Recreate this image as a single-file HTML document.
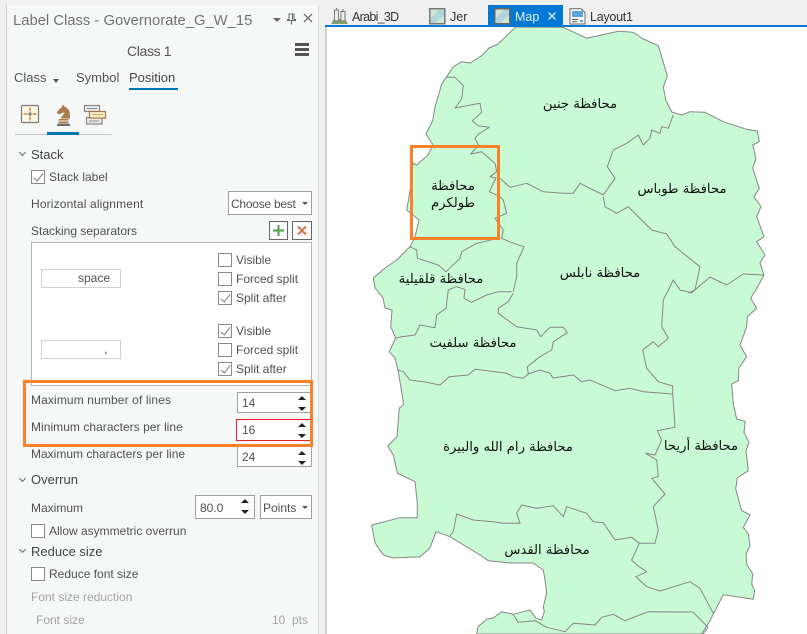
<!DOCTYPE html>
<html><head><meta charset="utf-8">
<style>
html,body{margin:0;padding:0;width:807px;height:634px;overflow:hidden;background:#f0f0f0}
body{position:relative;font-family:"Liberation Sans",sans-serif;font-size:12px;color:#505050}
.t{position:absolute;white-space:nowrap;height:16px;line-height:16px}
.b{position:absolute;box-sizing:border-box;background:#fff;border:1px solid #ababab}
.cb{position:absolute;box-sizing:border-box;width:14px;height:14px;border:1px solid #8a8a8a;background:#fff}
.cb.c:after{content:"";position:absolute;left:4px;top:0px;width:4px;height:9px;border:solid #777;border-width:0 1.5px 1.5px 0;transform:rotate(38deg)}
.up,.dn{position:absolute;width:0;height:0;border-left:4px solid transparent;border-right:4px solid transparent}
.up{border-bottom:4px solid #222}.dn{border-top:4px solid #222}
.h{font-size:13px;color:#444}
.g{color:#a3a3a3}
.chev{position:absolute;width:4px;height:4px;border:solid #666;border-width:0 1.6px 1.6px 0;transform:rotate(45deg)}
.tri{position:absolute;width:0;height:0;border-left:3px solid transparent;border-right:3px solid transparent;border-top:3px solid #555}
svg{position:absolute;overflow:visible}
</style></head><body>
<!-- map pane -->
<div style="position:absolute;left:325px;top:27px;width:482px;height:607px;background:#fff;border-left:2px solid #d0d0d0;box-sizing:border-box"></div>
<svg style="left:0;top:0" width="807" height="634" viewBox="0 0 807 634">
<g stroke="#868686" stroke-width="1" fill="none" stroke-linejoin="round">
<path fill="#c8fad4" d="M514.7 28L506.7 35.7L498 44L489 48L481.7 55.7L470 63L461.7 61.7L453 67L446.7 76.7L441.7 84L435 107L432.7 120.7L426 134L433 145L428 155L416.7 165L413 163L410.7 186.7L406.7 210L419 220L415 236.7L410 246.7L396.7 260L385 268L373.3 278L375 288L383 298L385 308L392 310L390.7 326.7L395.7 338L389.3 351.7L395 358L398 370L403 400L403.3 405L399.3 408L397 436.7L387.7 446L393.3 455L397.3 473L415 481.7L417.3 503L417.3 517.7L400 517.7L371.7 525L375 543L383.3 555L393.3 558L420 556.7L430 548L436 531.7L450 536.7L480 555L488.3 560.7L510 563L533 563L543.3 570L545 580L546.7 593L543.3 606.7L544.3 611.7L541.7 620L536 618.3L530 610L523 611.7L513.3 614.3L501.7 611.7L493.3 618L486.7 619.3L478 626.7L476.7 634L701.7 634L710 620.7L713.3 614L723.3 594.7L753.3 599.3L754.7 590.7L751.7 584L752.7 574L746.7 564L746 554L750 545.7L748.3 534L743.3 527.3L750 514.7L741.7 510.7L735.7 489L737.3 478L748.3 470.7L746 450.7L749 442.3L744 432.3L745.3 421.3L736.7 419L733.3 404L731.7 384L738.3 380.7L739 368L746.7 356.7L740 345L746.7 326.7L747.3 316.7L756.7 308.3L750.7 298.3L756.7 288.3L764 275L760 263L765 255L756.7 241.7L764 236.7L756.7 216.7L761 206.7L754 196.7L759.3 188.3L752.7 168.3L756 158.3L752.7 145L759.3 141.7L757.3 131L746.7 129.3L723.3 121.7L705 112.3L690 111.7L681.7 115L671.7 112L666 100.7L663.3 87.3L667.3 75.7L658.3 45.7L643.3 39L633.3 32.3L618.3 31.3L586.7 38.3L563.3 27.3L514.7 27Z"/>
<path d="M446.7 77.3L455 77.3L463.3 85.7L461.7 99L455 108L480 103.3L481.7 112.3L472.3 120.7L478.3 125.7L489.3 127.3L478.3 134L475 138.3L478.3 145L470.7 154L481.7 151.7L495 163.3L496.7 171.7L490 176.7L496 178L489.3 191.7L500 196.7L503.3 200L506.7 213.3L495 218.3L503.3 230L501.7 238.3L513.3 243.3L524 246.7L516.7 263.3L516.7 276.7L513.3 291.7"/>
<path d="M410 246.7L416.7 250L417.3 258.3L438.3 265L446 271.7L460 258.3L461.7 251.7L476.7 243.3L498.3 238.3"/>
<path d="M395.7 338.3L401.7 336.7L415 335L420 325L435 327.7L436.7 315L446 308.3L448.3 290L456 286.7L465 289.3L464 298.3L471.7 302.3L486.7 295L498.3 291.7L511.7 291.7"/>
<path d="M513.3 293.3L508.3 301.7L498.3 308.3L498.3 313.3L516.7 326.7L536.7 330L540.7 336.7L550 327.3L563.3 327.3L567.3 332.7L553.3 341.7L551.7 350L540 356.7L527.3 366.7L528.3 374"/>
<path d="M398.3 370L403.3 371.7L410 380L425 382L440 385L449.3 376.7L468.3 375L475 369.3L506.7 373.3L513.3 376.7L523.3 378.3L528.3 374L540 370L550 373.3L553 378L573.3 375L581.7 381.7L590 380L615 390.7L630 388.3L643.3 391.7L672.7 394"/>
<path d="M672.7 394L672.7 386L658.3 381.7L646.7 368.3L642.7 350L653.3 341.7L658.3 346.7L668.3 338.3L661.7 326.7L663.3 300L673.3 280L680 290L691.7 292.7L710 277L726.7 285L743.3 274L763 275"/>
<path d="M603.3 196.7L605 206.7L616.7 213.3L628.3 206.7L651.7 230L666.7 234L675 246.7L700 266.7L695 290L688.3 293.3"/>
<path d="M500 178.3L510 187.3L526.7 183.3L543.3 191.7L563.3 193.3L573.3 193.3L580 183.3L603.3 195L615 178.3L607.3 166.7L613.3 150L626.7 143.3L638.3 135L643.3 145L650 138.3L651.7 130L660 133.3L661.7 126.7L668.3 128.3L673.3 115"/>
<path d="M672.7 394L675 427.3L657.3 430.7L661.7 440L655 455L645.7 453.3L656.7 460L658.3 476.7L651.7 478.3L665 494L653.3 506.7L658.3 530L655 543.3L639.3 543.3"/>
<path d="M450 536L453.3 531.7L456.7 514L473.3 520L493.3 521.7L503.3 523.3L520 523.3L516.7 513.3L521.7 505L536.7 508.3L553.3 505.7L563.3 516.7L566.7 506.7L586.7 513.3L593.3 521.7L603.3 522.7L615 540L631.7 537.3L639.3 543.3L631.7 560L636.7 565L646.7 571.7L636 576.7L646.7 586.7L660 591L690 581.7L700 588.3L713.3 613.3"/>
<path d="M512.7 614L518.3 622.3L535 620.7L546.7 627.3L565 631.7L573.3 623.3L595 625L601.7 617.3L613.3 614.3L625 620.7L648.3 611.7L673 612L693 612L708 627.3L703 634"/>
</g>
<g font-family="'DejaVu Sans',sans-serif" font-size="13.2" fill="#111" text-anchor="middle" direction="rtl">
<text x="580" y="108">محافظة جنين</text>
<text x="682" y="193">محافظة طوباس</text>
<text x="600" y="277">محافظة نابلس</text>
<text x="441" y="283">محافظة قلقيلية</text>
<text x="473" y="347">محافظة سلفيت</text>
<text x="508" y="451">محافظة رام الله والبيرة</text>
<text x="701" y="450">محافظة أريحا</text>
<text x="547" y="554">محافظة القدس</text>
<text x="453" y="190">محافظة</text>
<text x="453" y="207">طولكرم</text>
</g>
<rect x="411.5" y="146.5" width="87" height="92" fill="none" stroke="#fb8128" stroke-width="3"/>
</svg>
<!-- tabs -->
<div style="position:absolute;left:325px;top:25px;width:482px;height:2px;background:#0078d4"></div>
<div style="position:absolute;left:488px;top:5px;width:75px;height:20px;background:#0078d4"></div>
<svg style="left:331px;top:7px" width="17" height="18" viewBox="0 0 17 18">
<path d="M0 17L3 12H14L17 17Z" fill="#7aa56a"/>
<rect x="3.5" y="3" width="4" height="11" fill="#eee" stroke="#777"/><rect x="10" y="4.500" width="4" height="9.500" fill="#eee" stroke="#777"/>
<path d="M5.500 1V3M12 2V4.500" stroke="#777"/>
</svg>
<div class="t" style="left:352px;top:9px;font-size:12.5px;color:#333;letter-spacing:-.7px">Arabi_3D</div>
<svg style="left:429px;top:8px" width="17" height="17" viewBox="0 0 17 17"><rect x=".75" y=".75" width="15" height="15" fill="#cfe7d2" stroke="#777" stroke-width="1.500"/><path d="M10 2H15V8L11 10L7 15H2V10Z" fill="#8fc4e0" opacity=".55"/></svg>
<div class="t" style="left:450px;top:9px;font-size:12.5px;color:#333">Jer</div>
<svg style="left:494px;top:8px" width="17" height="17" viewBox="0 0 17 17"><rect x=".75" y=".75" width="15" height="15" fill="#cfe7d2" stroke="#666" stroke-width="1.500"/><path d="M10 2H15V8L11 10L7 15H2V10Z" fill="#8fc4e0" opacity=".55"/></svg>
<div class="t" style="left:515px;top:9px;font-size:12.5px;color:#e4f1fb">Map</div>
<svg style="left:547px;top:11px" width="10" height="10"><path d="M1.500 1.500L8.500 8.500M8.500 1.500L1.500 8.500" stroke="#d5e9f8" stroke-width="1.300"/></svg>
<svg style="left:569px;top:8px" width="17" height="17" viewBox="0 0 17 17"><path d="M1 .75H12L16 4.500V16H1Z" fill="#fff" stroke="#666"/><rect x="3" y="3" width="11" height="6" fill="#5fa3dc"/><path d="M3 11.500H9M3 13.800H8" stroke="#555"/><path d="M11 12h3v2h-3z" fill="#5fa3dc"/></svg>
<div class="t" style="left:590px;top:9px;font-size:12.5px;color:#333;letter-spacing:-.25px">Layout1</div>

<!-- panel -->
<div style="position:absolute;left:6px;top:5px;width:313px;height:629px;box-sizing:border-box;background:#f6f8f8;border-left:1.500px solid #cfcfcf;border-right:1px solid #dcdcdc"></div>
<div class="t" style="left:13px;top:12px;font-size:14.8px;line-height:18px;height:18px;color:#727272">Label Class - Governorate_G_W_15</div>
<div class="tri" style="left:273px;top:18px;border-left-width:4px;border-right-width:4px;border-top-width:4px;border-top-color:#666"></div>
<svg style="left:286px;top:13px" width="12" height="12"><path d="M3 1H8V6.500H9.500V7.500H1.500V6.500H3ZM5.500 7.500V11.500M6.500 1V6.500" stroke="#666" fill="none"/></svg>
<svg style="left:303px;top:13px" width="10" height="10"><path d="M1 1L9 9M9 1L1 9" stroke="#707070" stroke-width="1.300"/></svg>
<div class="t" style="left:127px;top:43px;font-size:14px;color:#555;letter-spacing:-.35px">Class 1</div>
<div style="position:absolute;left:295px;top:43px;width:14px;height:3px;background:#555;box-shadow:0 5px 0 #555,0 10px 0 #555"></div>
<div class="t" style="left:14px;top:70px;font-size:13px;color:#555">Class</div>
<div class="tri" style="left:53px;top:79px;border-left-width:3.500px;border-right-width:3.500px;border-top-width:4px"></div>
<div class="t" style="left:76px;top:70px;font-size:13px;color:#555">Symbol</div>
<div class="t" style="left:129px;top:70px;font-size:13px;color:#444">Position</div>
<div style="position:absolute;left:129px;top:88px;width:49px;height:2px;background:#0078b8"></div>
<!-- position icons -->
<svg style="left:20px;top:104px" width="100" height="22" viewBox="0 0 100 22">
<rect x="1.500" y="1.500" width="17" height="17" rx="1" fill="#fdf7e4" stroke="#7a7a7a" stroke-width="1.200"/>
<path d="M10 3.500V7.500M10 12.500V16.500M3.500 10H7.500M12.500 10H16.500" stroke="#b07d3c" stroke-width="1.200"/><rect x="8.500" y="8.500" width="3" height="3" fill="#777"/>
<path d="M43 0.500L45 3C48 4 50 7 50 11V14.500H41C41 12 44 11 44.500 8.500L42 9L39.500 10.500L36.500 8.500L40 4.500L41.500 3.500Z" fill="#a97d4d"/>
<rect x="38.500" y="15" width="10" height="1.500" fill="#a97d4d"/><rect x="38.500" y="17.500" width="10" height="1.500" fill="#a97d4d"/>
<path d="M36.500 22L38 19.500H49L50.500 22Z" fill="#6e6e6e"/>
<rect x="64.500" y="1.500" width="15" height="6" fill="#eaeaea" stroke="#888" stroke-width="1.200"/>
<rect x="66.500" y="13.500" width="15.500" height="6.500" fill="#eaeaea" stroke="#888" stroke-width="1.200"/>
<path d="M67 4.500H77M69 17H79" stroke="#888"/>
<rect x="69.500" y="7.500" width="16" height="6.500" fill="#fbeecb" stroke="#9c7a45" stroke-width="1.200"/>
<path d="M72 10.500H83" stroke="#c9a765"/>
</svg>
<div style="position:absolute;left:15px;top:134px;width:96px;height:1px;background:#c4c4c4"></div>
<div style="position:absolute;left:47px;top:132px;width:32px;height:3px;background:#0078b8"></div>

<div class="chev" style="left:20px;top:150px"></div>
<div class="t h" style="left:31px;top:147px">Stack</div>
<div class="cb c" style="left:31px;top:170px"></div>
<div class="t" style="left:49px;top:169px">Stack label</div>
<div class="t" style="left:31px;top:196px;letter-spacing:.15px">Horizontal alignment</div>
<div class="b" style="left:228px;top:191px;width:84px;height:24px;border-color:#a0a0a0"></div>
<div class="t" style="left:231px;top:196px;letter-spacing:-.25px">Choose best</div>
<div class="tri" style="left:302px;top:202px"></div>
<div class="t" style="left:31px;top:223px">Stacking separators</div>
<div class="b" style="left:269px;top:221px;width:19px;height:19px;background:#fafafa;border-color:#666"></div>
<svg style="left:269px;top:221px" width="19" height="19"><path d="M9.500 4V15M4 9.500H15" stroke="#5aa75a" stroke-width="2.200"/></svg>
<div class="b" style="left:292px;top:221px;width:20px;height:19px;background:#fafafa;border-color:#666"></div>
<svg style="left:292px;top:221px" width="20" height="19"><path d="M6 5.500L14 13.500M14 5.500L6 13.500" stroke="#d27a5e" stroke-width="2.200"/></svg>
<div class="b" style="left:31px;top:242px;width:281px;height:144px;border-color:#b4b4b4"></div>
<div class="b" style="left:41px;top:269px;width:80px;height:19px;border-color:#d0d0d0"></div>
<div class="t" style="left:78px;top:270px">space</div>
<div class="b" style="left:41px;top:340px;width:80px;height:19px;border-color:#d0d0d0"></div>
<div class="t" style="left:104px;top:341px">,</div>
<div class="cb" style="left:218px;top:253px"></div><div class="t" style="left:236px;top:252px">Visible</div>
<div class="cb" style="left:218px;top:272px"></div><div class="t" style="left:236px;top:271px">Forced split</div>
<div class="cb c" style="left:218px;top:291px"></div><div class="t" style="left:236px;top:290px">Split after</div>
<div class="cb c" style="left:218px;top:324px"></div><div class="t" style="left:236px;top:323px">Visible</div>
<div class="cb" style="left:218px;top:343px"></div><div class="t" style="left:236px;top:342px">Forced split</div>
<div class="cb c" style="left:218px;top:362px"></div><div class="t" style="left:236px;top:361px">Split after</div>

<div class="t" style="left:31px;top:392px;letter-spacing:.12px">Maximum number of lines</div>
<div class="b" style="left:237px;top:392px;width:75px;height:21px;border-color:#a0a0a0"></div>
<div class="t" style="left:242px;top:395px">14</div>
<div class="up" style="left:298px;top:396px"></div><div class="dn" style="left:298px;top:407px"></div>
<div class="t" style="left:31px;top:419px;letter-spacing:.04px">Minimum characters per line</div>
<div class="b" style="left:236px;top:419px;width:76px;height:22px;border-color:#ee1c25"></div>
<div class="t" style="left:242px;top:422px">16</div>
<div class="up" style="left:298px;top:423px"></div><div class="dn" style="left:298px;top:434px"></div>
<div class="b" style="left:237px;top:446px;width:75px;height:21px;border-color:#a0a0a0"></div>
<div class="t" style="left:31px;top:446px">Maximum characters per line</div>
<div class="t" style="left:242px;top:449px">24</div>
<div class="up" style="left:298px;top:451px"></div><div class="dn" style="left:298px;top:461px"></div>
<div style="position:absolute;left:23px;top:380px;width:290px;height:67px;box-sizing:border-box;border:3.500px solid #fb8128"></div>

<div class="chev" style="left:20px;top:476px"></div>
<div class="t h" style="left:31px;top:472px">Overrun</div>
<div class="t" style="left:31px;top:500px">Maximum</div>
<div class="b" style="left:195px;top:495px;width:60px;height:24px;border-color:#a0a0a0"></div>
<div class="t" style="left:200px;top:500px">80.0</div>
<div class="up" style="left:241px;top:499px"></div><div class="dn" style="left:241px;top:510px"></div>
<div class="b" style="left:260px;top:495px;width:52px;height:24px;border-color:#a0a0a0"></div>
<div class="t" style="left:263px;top:500px">Points</div>
<div class="tri" style="left:302px;top:506px"></div>
<div class="cb" style="left:31px;top:524px"></div>
<div class="t" style="left:49px;top:523px">Allow asymmetric overrun</div>
<div class="chev" style="left:20px;top:547px"></div>
<div class="t h" style="left:31px;top:544px">Reduce size</div>
<div class="cb" style="left:31px;top:567px"></div>
<div class="t" style="left:49px;top:566px">Reduce font size</div>
<div class="t g" style="left:31px;top:589px">Font size reduction</div>
<div class="t g" style="left:36px;top:612px">Font size</div>
<div class="t g" style="left:272px;top:612px">10</div>
<div class="t g" style="left:292px;top:612px">pts</div>
</body></html>
